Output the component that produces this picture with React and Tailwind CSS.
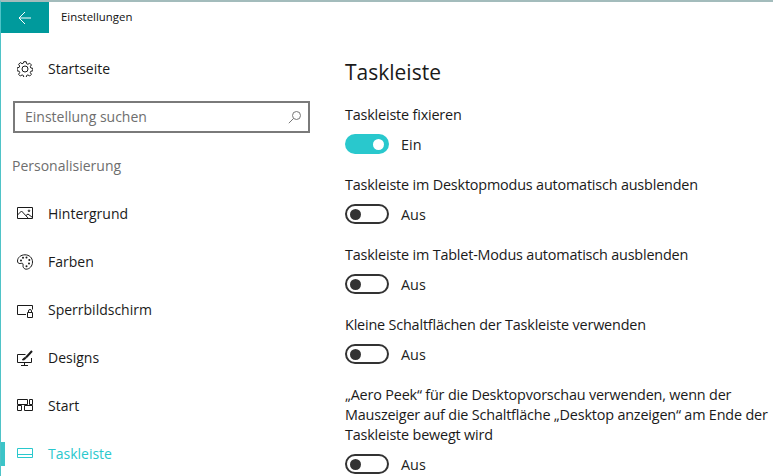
import React from "react";

function Toggle({ on }) {
  return (
    <div className="flex items-center h-[20px] gap-[12px]">
      {on ? (
        <div className="w-[44px] h-[20px] rounded-full bg-[#29c8cd] flex items-center justify-end pr-[5px]">
          <div className="w-[11px] h-[11px] rounded-full bg-white" />
        </div>
      ) : (
        <div className="w-[44px] h-[20px] rounded-full border-2 border-[#333333] flex items-center pl-[3px]">
          <div className="w-[11px] h-[11px] rounded-full bg-[#333333]" />
        </div>
      )}
      <span className="pt-[1px] text-[14.4px] leading-[20px] text-[#222222]">{on ? "Ein" : "Aus"}</span>
    </div>
  );
}

function Setting({ label, on }) {
  return (
    <div className="mb-[20px]">
      <div className="pt-[1px] mb-[9px] text-[14.4px] leading-[20px] tracking-[-0.18px] text-[#1a1a1a]">{label}</div>
      <Toggle on={on} />
    </div>
  );
}

const icons = {
  gear: (
    <svg width="16" height="16" viewBox="0 0 16 16" fill="none" stroke="currentColor" strokeWidth="1">
      <circle cx="8" cy="8" r="3" />
      <path d="M6.800.7h2.400l.4 2 1.300.6 1.800-1.100 1.700 1.700-1.100 1.800.6 1.300 2 .4v2.400l-2 .4-.6 1.300 1.100 1.800-1.700 1.700-1.800-1.100-1.300.6-.4 2H6.800l-.4-2-1.300-.6-1.800 1.100-1.700-1.700 1.100-1.800-.6-1.300-2-.4V6.800l2-.4.6-1.300-1.100-1.800 1.700-1.700 1.800 1.100 1.300-.6z" />
    </svg>
  ),
  image: (
    <svg width="16" height="16" viewBox="0 0 16 16" fill="none" stroke="currentColor" strokeWidth="1">
      <path d="M.5 1.500h15v11H.5z" />
      <path d="M.5 9l4-4 7 7.500M9 9.500l2-1.500 4.500 3.500" />
      <circle cx="12" cy="4.800" r=".8" />
    </svg>
  ),
  palette: (
    <svg width="16" height="16" viewBox="0 0 16 16" fill="none" stroke="currentColor" strokeWidth="1">
      <path d="M8 .8C3.800.8.500 3.600.500 7c0 1.800 1.200 2.700 2.600 2.500 1.300-.2 2.400-.5 2.900.3.500.9-.4 1.700.1 3 .5 1.300 1.600 2.400 3 2.400 3.500 0 6.400-3.200 6.400-7.200 0-4.200-3.200-7.200-7.500-7.200z" />
      <g fill="currentColor" stroke="none">
        <circle cx="4" cy="6.500" r="1" />
        <circle cx="6" cy="3.800" r="1" />
        <circle cx="9.500" cy="3.500" r="1" />
        <circle cx="12.300" cy="6" r="1" />
        <circle cx="12" cy="9.500" r="1" />
        <circle cx="9.500" cy="12.200" r="1" />
      </g>
    </svg>
  ),
  lock: (
    <svg width="16" height="16" viewBox="0 0 16 16" fill="none" stroke="currentColor" strokeWidth="1">
      <path d="M9 12.500H.5v-9h15v4" />
      <path d="M10.500 10.500h5v5h-5zM11.500 10.500V9a1.500 1.500 0 0 1 3 0v1.500" />
    </svg>
  ),
  designs: (
    <svg width="16" height="16" viewBox="0 0 16 16" fill="none" stroke="currentColor" strokeWidth="1">
      <path d="M8.500 4.500H.5v8h14V8" />
      <path d="M4 15.500h7M7.500 12.500v3" />
      <path d="M15 1L9 7.500" strokeWidth="2" />
      <path d="M8.500 7.500c-1.500 0-2.500 1-3 2.500 1.500 0 3-.5 3.500-2z" fill="currentColor" />
    </svg>
  ),
  start: (
    <svg width="16" height="16" viewBox="0 0 16 16" fill="none" stroke="currentColor" strokeWidth="1">
      <path d="M.5 1.500h10v5H.5zM12.500 1.500h3v5h-3zM.5 7.500h4v5h-4zM7.500 7.500h8v5h-8z" />
    </svg>
  ),
  taskbar: (
    <svg width="16" height="16" viewBox="0 0 16 16" fill="none" stroke="currentColor" strokeWidth="1">
      <path d="M.5 2.500h15v9H.5zM.5 8.500h15" />
    </svg>
  ),
};

function NavItem({ icon, label, active }) {
  return (
    <div className={`relative flex items-center h-[48px] pl-[16px] ${active ? "text-[#29c8cd]" : "text-[#1a1a1a]"}`}>
      {active && <div className="absolute left-0 top-[12px] w-[4px] h-[24px] bg-[#3cc4c8]" />}
      <span className="w-[16px] h-[16px] mr-[15px] flex">{icons[icon]}</span>
      <span className="text-[14px] leading-[20px]">{label}</span>
    </div>
  );
}

export default function App() {
  return (
    <div
      className="w-[773px] h-[476px] overflow-hidden bg-white border-l-[1px] border-t-[2px] border-l-[#4fc3c7] border-t-[#a3bcbc] flex flex-col"
      style={{ fontFamily: '"Open Sans", sans-serif' }}
    >
      {/* Title bar */}
      <div className="flex items-center h-[31px] shrink-0">
        <div className="w-[48px] h-[31px] bg-[#009a9c] flex items-center justify-center text-white">
          <svg width="14" height="14" viewBox="0 0 14 14" fill="none" stroke="currentColor" strokeWidth="1">
            <path d="M13 7H1M7 1L1 7l6 6" />
          </svg>
        </div>
        <span className="ml-[12px] mb-[1px] text-[11.400px] text-[#111111]">Einstellungen</span>
      </div>

      <div className="flex flex-1 min-h-0">
        {/* Sidebar */}
        <div className="w-[344px] shrink-0">
          <div className="flex items-center h-[48px] mt-[12px] pl-[16px] text-[#1a1a1a]">
            <span className="w-[16px] h-[16px] mr-[15px] flex">{icons.gear}</span>
            <span className="text-[14px] leading-[20px]">Startseite</span>
          </div>
          <div className="ml-[12px] mt-[8px] w-[297px] h-[32px] border-2 border-[#7a7a7a] flex items-center justify-between pl-[10px] pr-[6px]">
            <span className="mb-[1px] text-[14px] text-[#6e6e6e]">Einstellung suchen</span>
            <svg width="14" height="14" viewBox="0 0 14 14" fill="none" stroke="#777777" strokeWidth="1">
              <circle cx="8.500" cy="5.500" r="4" />
              <path d="M5.500 8.500L.8 13.200" />
            </svg>
          </div>
          <div className="ml-[11px] mt-[23px] h-[20px] text-[14px] leading-[20px] text-[#6e6e6e]">Personalisierung</div>
          <div className="mt-[14px]">
            <NavItem icon="image" label="Hintergrund" />
            <NavItem icon="palette" label="Farben" />
            <NavItem icon="lock" label="Sperrbildschirm" />
            <NavItem icon="designs" label="Designs" />
            <NavItem icon="start" label="Start" />
            <NavItem icon="taskbar" label="Taskleiste" active />
          </div>
        </div>

        {/* Content */}
        <div className="flex-1 min-w-0 whitespace-nowrap">
          <h1 className="mt-[23px] mb-[16px] text-[21px] leading-[32px] text-[#1a1a1a]">Taskleiste</h1>
          <Setting label="Taskleiste fixieren" on />
          <Setting label="Taskleiste im Desktopmodus automatisch ausblenden" />
          <Setting label="Taskleiste im Tablet-Modus automatisch ausblenden" />
          <Setting label="Kleine Schaltflächen der Taskleiste verwenden" />
          <Setting
            label={
              <>
                „Aero Peek“ für die Desktopvorschau verwenden, wenn der
                <br />
                Mauszeiger auf die Schaltfläche „Desktop anzeigen“ am Ende der
                <br />
                Taskleiste bewegt wird
              </>
            }
          />
        </div>
      </div>
    </div>
  );
}
